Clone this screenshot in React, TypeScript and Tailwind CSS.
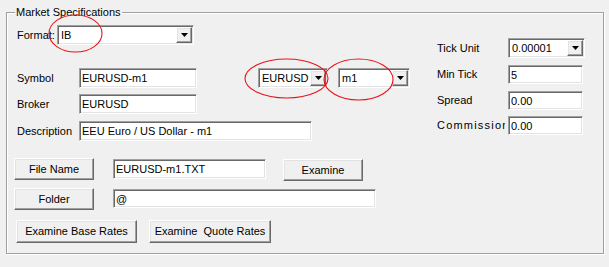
import React from 'react';

// classic win32 3d borders
const sunken =
  'border border-t-[#a0a0a0] border-l-[#a0a0a0] border-b-white border-r-white bg-white shadow-[inset_1px_1px_0_#696969,inset_-1px_-1px_0_#e3e3e3]';
const raised =
  'border border-t-white border-l-white border-b-[#696969] border-r-[#696969] bg-[#f0f0f0] shadow-[inset_-1px_-1px_0_#a0a0a0,inset_1px_1px_0_#e3e3e3]';

function TextBox({ value, className }: { value: string; className: string }) {
  return (
    <input
      readOnly
      value={value}
      className={`${sunken} ${className} px-[2px] outline-none text-[11px] leading-none`}
    />
  );
}

function Combo({ value, className }: { value: string; className: string }) {
  return (
    <div className={`${sunken} ${className} flex items-stretch p-[1px]`}>
      <span className="flex-1 pl-[2px] flex items-center overflow-hidden whitespace-nowrap">{value}</span>
      <span className={`${raised} w-[16px] flex items-center justify-center`}>
        <svg width="7" height="4" viewBox="0 0 7 4">
          <path d="M0 0h7L3.5 4z" fill="#000" />
        </svg>
      </span>
    </div>
  );
}

function Btn({ label, className }: { label: string; className: string }) {
  return (
    <button className={`${raised} ${className} flex items-center justify-center text-[11px] whitespace-nowrap`}>
      {label}
    </button>
  );
}

export default function App() {
  return (
    <div className="relative w-[609px] h-[267px] overflow-hidden bg-[#f0f0f0] pt-[5px] pl-[6px] font-['Liberation_Sans',Arial,sans-serif] text-[11px] text-black">
      <fieldset className="w-[598px] h-[249px] border border-[#a0a0a0] shadow-[1px_1px_0_#fff,inset_1px_1px_0_#fff]">
        <legend className="ml-[8px] px-[1px] leading-[14px]">Market Specifications</legend>

        <div className="flex">
          {/* left side */}
          <div className="w-[413px] flex flex-col">
            <div className="mt-[6px] pl-[10px] flex items-center">
              <span className="w-[40px] whitespace-nowrap overflow-hidden">Format:</span>
              <Combo value="IB" className="w-[137px] h-[20px]" />
            </div>

            <div className="mt-[23px] pl-[10px] flex items-center">
              <span className="w-[62px]">Symbol</span>
              <TextBox value="EURUSD-m1" className="w-[118px] h-[20px]" />
              <Combo value="EURUSD" className="ml-[61px] w-[70px] h-[20px]" />
              <Combo value="m1" className="ml-[10px] w-[72px] h-[20px]" />
            </div>

            <div className="mt-[6px] pl-[10px] flex items-center">
              <span className="w-[62px]">Broker</span>
              <TextBox value="EURUSD" className="w-[118px] h-[20px]" />
            </div>

            <div className="mt-[7px] pl-[10px] flex items-center">
              <span className="w-[62px]">Description</span>
              <TextBox value="EEU Euro / US Dollar - m1" className="w-[233px] h-[20px]" />
            </div>

            <div className="mt-[17px] pl-[7px] flex items-start">
              <Btn label="File Name" className="w-[80px] h-[22px]" />
              <TextBox value="EURUSD-m1.TXT" className="ml-[19px] mt-[1px] w-[153px] h-[20px]" />
              <Btn label="Examine" className="ml-[17px] mt-[1px] w-[80px] h-[22px]" />
            </div>

            <div className="mt-[7px] pl-[7px] flex items-start">
              <Btn label="Folder" className="w-[80px] h-[22px]" />
              <TextBox value="@" className="ml-[19px] mt-[1px] w-[263px] h-[19px]" />
            </div>

            <div className="mt-[10px] pl-[9px] flex items-start">
              <Btn label="Examine Base Rates" className="w-[121px] h-[23px]" />
              <Btn label="Examine  Quote Rates" className="ml-[12px] w-[122px] h-[23px] whitespace-pre" />
            </div>
          </div>

          {/* right side */}
          <div className="pl-[17px] flex flex-col">
            <div className="mt-[19px] flex items-center">
              <span className="w-[71px]">Tick Unit</span>
              <Combo value="0.00001" className="w-[77px] h-[20px]" />
            </div>
            <div className="mt-[7px] flex items-center">
              <span className="w-[71px]">Min Tick</span>
              <TextBox value="5" className="w-[75px] h-[19px]" />
            </div>
            <div className="mt-[7px] flex items-center">
              <span className="w-[71px]">Spread</span>
              <TextBox value="0.00" className="w-[75px] h-[19px]" />
            </div>
            <div className="mt-[6px] flex items-center">
              <span className="w-[68px] mr-[3px] overflow-hidden whitespace-nowrap tracking-[1.2px]">Commission</span>
              <TextBox value="0.00" className="w-[75px] h-[19px]" />
            </div>
          </div>
        </div>
      </fieldset>

      {/* red annotation rings */}
      <svg className="absolute left-0 top-0 pointer-events-none" width="609" height="267" viewBox="0 0 609 267">
        <ellipse cx="75.5" cy="33.5" rx="26.5" ry="18.5" fill="none" stroke="#e8141b" strokeWidth="1.1" />
        <ellipse cx="286.5" cy="78.5" rx="41.5" ry="19.5" fill="none" stroke="#e8141b" strokeWidth="1.1" />
        <ellipse cx="358.5" cy="79.5" rx="34.5" ry="20.5" fill="none" stroke="#e8141b" strokeWidth="1.1" />
      </svg>
    </div>
  );
}
